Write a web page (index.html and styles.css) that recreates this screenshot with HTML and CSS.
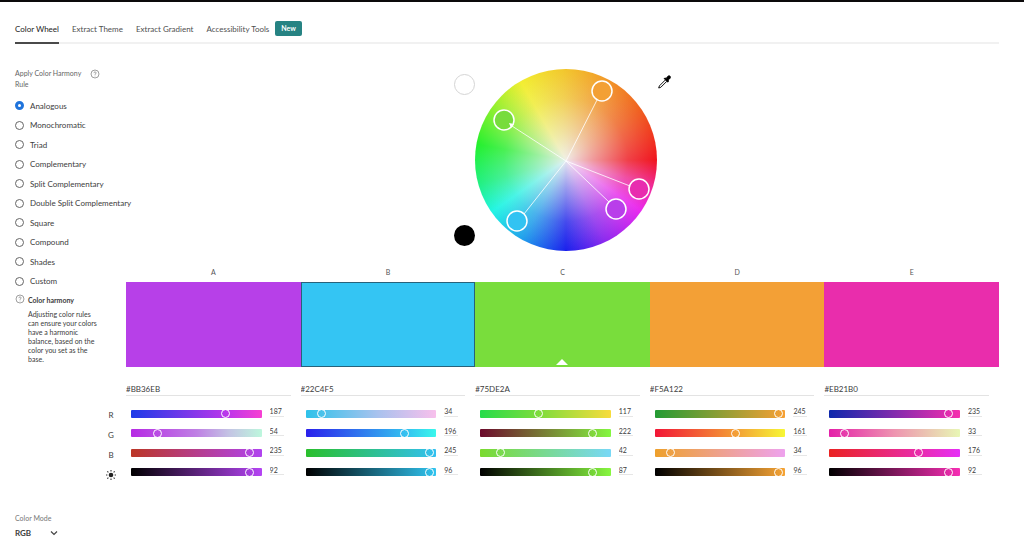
FILE: index.html
```html
<!DOCTYPE html>
<html lang="en">
<head>
<meta charset="utf-8">
<title>Color wheel</title>
<link rel="stylesheet" href="styles.css">
</head>
<body>
<div class="page">
  <nav class="tabs">
    <a class="tab tab-active" href="#">Color Wheel</a>
    <a class="tab" href="#">Extract Theme</a>
    <a class="tab" href="#">Extract Gradient</a>
    <a class="tab tab-new" href="#">Accessibility Tools <span class="badge">New</span></a>
  </nav>

  <main class="layout">
    <aside class="sidebar">
      <div class="rule-head">
        <span class="rule-title" id="rule-title">Apply Color Harmony Rule</span>
        <svg class="help" viewBox="0 0 10 10" aria-hidden="true"><circle cx="5" cy="5" r="4"/><path d="M3.9 4.1C3.9 2.5 6.2 2.6 6.1 4C6 4.9 5 4.9 5 5.8M5 6.7V7.3"/></svg>
      </div>
      <div class="rules" role="radiogroup" aria-labelledby="rule-title">
        <label class="rule"><input class="radio" type="radio" name="rule" checked>Analogous</label>
        <label class="rule"><input class="radio" type="radio" name="rule">Monochromatic</label>
        <label class="rule"><input class="radio" type="radio" name="rule">Triad</label>
        <label class="rule"><input class="radio" type="radio" name="rule">Complementary</label>
        <label class="rule"><input class="radio" type="radio" name="rule">Split Complementary</label>
        <label class="rule"><input class="radio" type="radio" name="rule">Double Split Complementary</label>
        <label class="rule"><input class="radio" type="radio" name="rule">Square</label>
        <label class="rule"><input class="radio" type="radio" name="rule">Compound</label>
        <label class="rule"><input class="radio" type="radio" name="rule">Shades</label>
        <label class="rule"><input class="radio" type="radio" name="rule">Custom</label>
      </div>
      <div class="tip">
        <svg class="help" viewBox="0 0 10 10" aria-hidden="true"><circle cx="5" cy="5" r="4"/><path d="M3.9 4.1C3.9 2.5 6.2 2.6 6.1 4C6 4.9 5 4.9 5 5.8M5 6.7V7.3"/></svg>
        <div>
          <h2 class="tip-title">Color harmony</h2>
          <p class="tip-text">Adjusting color rules can ensure your colors have a harmonic balance, based on the color you set as the base.</p>
        </div>
      </div>
    </aside>

    <section class="workspace">
      <div class="picker">
        <div class="backdrops">
          <button class="backdrop backdrop-white" aria-label="White background"></button>
          <button class="backdrop backdrop-black" aria-label="Black background"></button>
        </div>
        <div class="wheel">
          <svg class="wheel-marks" viewBox="0 0 182 182" aria-hidden="true">
            <g class="spokes">
              <path d="M91 92L122 31M91 92L37 57M91 92L49 145M91 92L155 117M91 92L134 133"/>
            </g>
            <g class="handles">
              <circle cx="127" cy="22" r="10" fill="#f3a035"/>
              <circle cx="29" cy="51" r="10" fill="#77dc3c"/>
              <circle cx="42" cy="152" r="10" fill="#32c3f2"/>
              <circle cx="141" cy="140" r="10" fill="#b93eea"/>
              <circle cx="164" cy="120" r="10" fill="#e82caf"/>
            </g>
            <path class="arrow" d="M34 54L39 55L36 59Z"/>
          </svg>
        </div>
        <button class="dropper" aria-label="Pick a color">
          <svg class="dropper-icon" viewBox="0 0 14 14" aria-hidden="true"><path d="M8.2 5.1L2.4 10.9L1.7 13L3.8 12.3L9.6 6.5" fill="#fff" stroke="#111" stroke-width="1"/><path d="M7.2 3.5L8.2 3.1L9.2 3.6L10.6 1.6C11.6.5 13 .7 13.3 1.7C13.6 2.7 13 3.6 11.2 5.1L11.4 6.4L10.6 7.2Z" fill="#000" stroke="#000" stroke-width="1" stroke-linejoin="round"/></svg>
        </button>
      </div>

      <div class="swatches">
        <div class="swatch"><span class="swatch-name">A</span><button class="fill fill-a" aria-label="Swatch A"></button></div>
        <div class="swatch"><span class="swatch-name">B</span><button class="fill fill-b" aria-label="Swatch B"></button></div>
        <div class="swatch"><span class="swatch-name">C</span><button class="fill fill-c" aria-label="Swatch C, base color"><svg class="base-mark" viewBox="0 0 12 6" aria-hidden="true"><path d="M0 6L6 0L12 6Z"/></svg></button></div>
        <div class="swatch"><span class="swatch-name">D</span><button class="fill fill-d" aria-label="Swatch D"></button></div>
        <div class="swatch"><span class="swatch-name">E</span><button class="fill fill-e" aria-label="Swatch E"></button></div>
      </div>
    </section>

    <div class="channel-names">
      <span class="channel-name">R</span>
      <span class="channel-name">G</span>
      <span class="channel-name">B</span>
      <span class="channel-name"><svg class="sun" viewBox="0 0 12 12" aria-hidden="true"><circle cx="6" cy="6" r="2.3" fill="#222"/><path d="M6 1V2.5M6 9.5V11M1 6H2.4M9.6 6H11M2.3 2.3L3.4 3.4M8.6 8.6L9.7 9.7M2.3 9.7L3.4 8.6M8.6 3.4L9.7 2.3" stroke="#333" stroke-width="1.1"/></svg></span>
    </div>

    <section class="columns">
      <div class="column">
        <input class="hex" aria-label="Hex A" value="#BB36EB">
        <div class="sliders">
          <div class="row"><div class="track a-r"><input class="range" type="range" max="255" value="187" aria-label="A red"></div><input class="num" aria-label="A red value" value="187"></div>
          <div class="row"><div class="track a-g"><input class="range" type="range" max="255" value="54" aria-label="A green"></div><input class="num" aria-label="A green value" value="54"></div>
          <div class="row"><div class="track a-b"><input class="range" type="range" max="255" value="235" aria-label="A blue"></div><input class="num" aria-label="A blue value" value="235"></div>
          <div class="row"><div class="track a-l"><input class="range" type="range" max="100" value="92" aria-label="A brightness"></div><input class="num" aria-label="A brightness value" value="92"></div>
        </div>
      </div>
      <div class="column">
        <input class="hex" aria-label="Hex B" value="#22C4F5">
        <div class="sliders">
          <div class="row"><div class="track b-r"><input class="range" type="range" max="255" value="34" aria-label="B red"></div><input class="num" aria-label="B red value" value="34"></div>
          <div class="row"><div class="track b-g"><input class="range" type="range" max="255" value="196" aria-label="B green"></div><input class="num" aria-label="B green value" value="196"></div>
          <div class="row"><div class="track b-b"><input class="range" type="range" max="255" value="245" aria-label="B blue"></div><input class="num" aria-label="B blue value" value="245"></div>
          <div class="row"><div class="track b-l"><input class="range" type="range" max="100" value="96" aria-label="B brightness"></div><input class="num" aria-label="B brightness value" value="96"></div>
        </div>
      </div>
      <div class="column">
        <input class="hex" aria-label="Hex C" value="#75DE2A">
        <div class="sliders">
          <div class="row"><div class="track c-r"><input class="range" type="range" max="255" value="117" aria-label="C red"></div><input class="num" aria-label="C red value" value="117"></div>
          <div class="row"><div class="track c-g"><input class="range" type="range" max="255" value="222" aria-label="C green"></div><input class="num" aria-label="C green value" value="222"></div>
          <div class="row"><div class="track c-b"><input class="range" type="range" max="255" value="42" aria-label="C blue"></div><input class="num" aria-label="C blue value" value="42"></div>
          <div class="row"><div class="track c-l"><input class="range" type="range" max="100" value="87" aria-label="C brightness"></div><input class="num" aria-label="C brightness value" value="87"></div>
        </div>
      </div>
      <div class="column">
        <input class="hex" aria-label="Hex D" value="#F5A122">
        <div class="sliders">
          <div class="row"><div class="track d-r"><input class="range" type="range" max="255" value="245" aria-label="D red"></div><input class="num" aria-label="D red value" value="245"></div>
          <div class="row"><div class="track d-g"><input class="range" type="range" max="255" value="161" aria-label="D green"></div><input class="num" aria-label="D green value" value="161"></div>
          <div class="row"><div class="track d-b"><input class="range" type="range" max="255" value="34" aria-label="D blue"></div><input class="num" aria-label="D blue value" value="34"></div>
          <div class="row"><div class="track d-l"><input class="range" type="range" max="100" value="96" aria-label="D brightness"></div><input class="num" aria-label="D brightness value" value="96"></div>
        </div>
      </div>
      <div class="column">
        <input class="hex" aria-label="Hex E" value="#EB21B0">
        <div class="sliders">
          <div class="row"><div class="track e-r"><input class="range" type="range" max="255" value="235" aria-label="E red"></div><input class="num" aria-label="E red value" value="235"></div>
          <div class="row"><div class="track e-g"><input class="range" type="range" max="255" value="33" aria-label="E green"></div><input class="num" aria-label="E green value" value="33"></div>
          <div class="row"><div class="track e-b"><input class="range" type="range" max="255" value="176" aria-label="E blue"></div><input class="num" aria-label="E blue value" value="176"></div>
          <div class="row"><div class="track e-l"><input class="range" type="range" max="100" value="92" aria-label="E brightness"></div><input class="num" aria-label="E brightness value" value="92"></div>
        </div>
      </div>
    </section>
  </main>

  <footer class="mode">
    <label class="mode-label" for="mode">Color Mode</label>
    <div class="mode-box">
      <select class="mode-select" id="mode"><option>RGB</option></select>
      <svg class="chevron" viewBox="0 0 8 6" aria-hidden="true"><path d="M1 1.5L4 4.5L7 1.5"/></svg>
    </div>
  </footer>
</div>
</body>
</html>
```

FILE: styles.css
```css
* { box-sizing: border-box; }

body {
  margin: 0;
  background: #fff;
  color: #3c3c3c;
  font: 8px/12px Lato, "Noto Sans", sans-serif;
}

button, input, select {
  margin: 0;
  padding: 0;
  border: 0;
  background: none;
  color: inherit;
  font: inherit;
}

.page {
  border-top: 2px solid #0c0a0b;
  padding: 17px 25px 0 15px;
}

/* Tabs */
.tabs {
  display: flex;
  gap: 13px;
  height: 25px;
  border-bottom: 2px solid #f1f1f1;
}
.tab {
  display: flex;
  align-items: center;
  height: 25px;
  padding-bottom: 4px;
  border-bottom: 2px solid transparent;
  color: #505050;
  text-decoration: none;
  white-space: nowrap;
}
.tab-active { border-color: #4a4a4a; color: #222; }
.tab-new { gap: 6px; }
.badge {
  padding: 2px 6px;
  border-radius: 2px;
  background: #268383;
  color: #fff;
  font-size: 7px;
  font-weight: 700;
  line-height: 11px;
}

.layout {
  display: grid;
  grid-template-columns: 111px minmax(0, 1fr);
  padding-top: 24px;
}

/* Harmony rules */
.rule-head { display: flex; gap: 5px; height: 28px; }
.rule-title { width: 70px; color: #666; font-size: 7px; line-height: 11px; }
.help { flex: none; width: 10px; height: 10px; fill: none; stroke: #777; stroke-width: .7; }
.rule-head .help { margin-top: 1px; }
.rules { display: grid; grid-template-rows: repeat(10, 1fr); height: 195px; }
.rule { display: flex; align-items: center; gap: 6px; white-space: nowrap; }
.radio {
  appearance: none;
  width: 9px;
  height: 9px;
  border: 1px solid #666;
  border-radius: 50%;
  background: #fff;
}
.radio:checked { border: 3px solid #1f74dc; }
.tip { display: flex; gap: 3px; padding-top: 3px; }
.tip-title { margin: 0; font-size: 7px; line-height: 12px; }
.tip-text { width: 70px; margin: 4px 0 0; font-size: 7px; line-height: 9px; }

/* Wheel */
.picker { display: flex; justify-content: center; padding-top: 1px; }
.backdrops {
  display: flex;
  flex-direction: column;
  justify-content: space-between;
  padding: 5px 0;
}
.backdrop { width: 21px; height: 21px; border-radius: 50%; }
.backdrop-white { border: 1px solid #d5d5d5; background: #fff; }
.backdrop-black { background: #000; }
.wheel {
  width: 182px;
  height: 182px;
  border-radius: 50%;
  background:
    radial-gradient(closest-side, rgba(240, 240, 240, .95), rgba(240, 240, 240, .6) 30%, rgba(240, 240, 240, .2) 68%, rgba(240, 240, 240, 0)),
    conic-gradient(from 90deg, #f0141e, #f02890 16deg, #ea28ee 34deg, #8a28ee 65deg, #1a20ec 90deg, #209cec 118deg, #20f5e4 145deg, #20f080 165deg, #22f02c 190deg, #8cf02c 215deg, #f2ee30 240deg, #f2c82c 268deg, #f29a28 296deg, #f0601e 325deg, #f0141e);
}
.wheel-marks { display: block; width: 100%; height: 100%; }
.spokes { fill: none; stroke: #fff; stroke-opacity: .8; stroke-width: 1; }
.handles { stroke: #fff; stroke-width: 1.5; }
.arrow { fill: #fff; }
.dropper { align-self: flex-start; height: 14px; margin-top: 6px; }
.dropper-icon { display: block; width: 14px; height: 14px; }

/* Swatches */
.swatches { display: grid; grid-template-columns: repeat(5, 1fr); padding-top: 15px; }
.swatch { display: flex; flex-direction: column; }
.swatch-name { height: 16px; color: #555; font-size: 7px; text-align: center; }
.fill { display: flex; align-items: flex-end; justify-content: center; height: 85px; padding-bottom: 2px; }
.fill-a { background: #b740e8; }
.fill-b { border: 1px solid #28627a; background: #34c5f3; }
.fill-c { background: #79dd3c; }
.fill-d { background: #f3a036; }
.fill-e { background: #e92dac; }
.base-mark { width: 12px; height: 6px; fill: #fff; }

/* Channel controls */
.channel-names { display: flex; flex-direction: column; align-items: flex-end; padding: 38px 9px 0 0; }
.channel-name { display: flex; align-items: center; justify-content: center; width: 12px; height: 20px; }
.sun { width: 12px; height: 12px; }
.columns { display: grid; grid-template-columns: repeat(5, minmax(0, 1fr)); padding-top: 15px; }
.hex {
  display: block;
  width: calc(100% - 10px);
  height: 14px;
  border-bottom: 1px solid #e3e3e3;
}
.sliders {
  display: grid;
  grid-template-rows: repeat(4, 1fr);
  height: 78px;
  margin: 8px 17px 0 5px;
}
.row { display: flex; align-items: center; gap: 8px; }
.track { display: flex; flex: 1; min-width: 0; height: 8px; border-radius: 1px; }
.range {
  appearance: none;
  flex: none;
  width: calc(100% + 9px);
  height: 8px;
  margin-left: -6px;
}
.range::-webkit-slider-thumb {
  appearance: none;
  width: 9px;
  height: 9px;
  border: 1px solid #fff;
  border-radius: 50%;
  background: transparent;
}
.num {
  width: 14px;
  height: 10px;
  margin-bottom: 4px;
  border-bottom: 1px solid #e6e6e6;
  font-size: 7px;
  line-height: 9px;
}

.a-r { background: linear-gradient(90deg, #1d3be8, #bb36eb 73%, #f740d2); }
.a-g { background: linear-gradient(90deg, #b62ae4, #bf80e4 50%, #c4c4e4 75%, #bdf7dd); }
.a-b { background: linear-gradient(90deg, #bb3626, #b044f0); }
.a-l { background: linear-gradient(90deg, #000, #b544f4); }
.b-r { background: linear-gradient(90deg, #2ec2ea, #a8c2ee 55%, #f8c0ec); }
.b-g { background: linear-gradient(90deg, #2a20ec, #34c4f0 78%, #3af7ec); }
.b-b { background: linear-gradient(90deg, #2abf2c, #32c0f0); }
.b-l { background: linear-gradient(90deg, #000, #30c4f0); }
.c-r { background: linear-gradient(90deg, #26dc4a, #80dc3c 46%, #f8dc3c); }
.c-g { background: linear-gradient(90deg, #6c0a2c, #84f740); }
.c-b { background: linear-gradient(90deg, #7ada2e, #78d8f7); }
.c-l { background: linear-gradient(90deg, #000, #88f740); }
.d-r { background: linear-gradient(90deg, #249b34, #f7a034); }
.d-g { background: linear-gradient(90deg, #f21636, #f3a036 63%, #f7f736); }
.d-b { background: linear-gradient(90deg, #eea02c, #eea2ee); }
.d-l { background: linear-gradient(90deg, #000, #f7a434); }
.e-r { background: linear-gradient(90deg, #0e28ac, #f72eae); }
.e-g { background: linear-gradient(90deg, #e420a8, #ee94b0 50%, #e8f7b4); }
.e-b { background: linear-gradient(90deg, #ea2222, #e92dac 69%, #e62ef7); }
.e-l { background: linear-gradient(90deg, #000, #f72eb4); }

/* Color mode */
.mode { padding-top: 27px; }
.mode-label { display: block; color: #777; font-size: 7px; }
.mode-box { display: flex; align-items: center; padding-top: 3px; }
.mode-select { appearance: none; width: 35px; height: 12px; font-weight: 700; }
.chevron { width: 8px; height: 6px; fill: none; stroke: #444; stroke-width: 1.2; }
```
